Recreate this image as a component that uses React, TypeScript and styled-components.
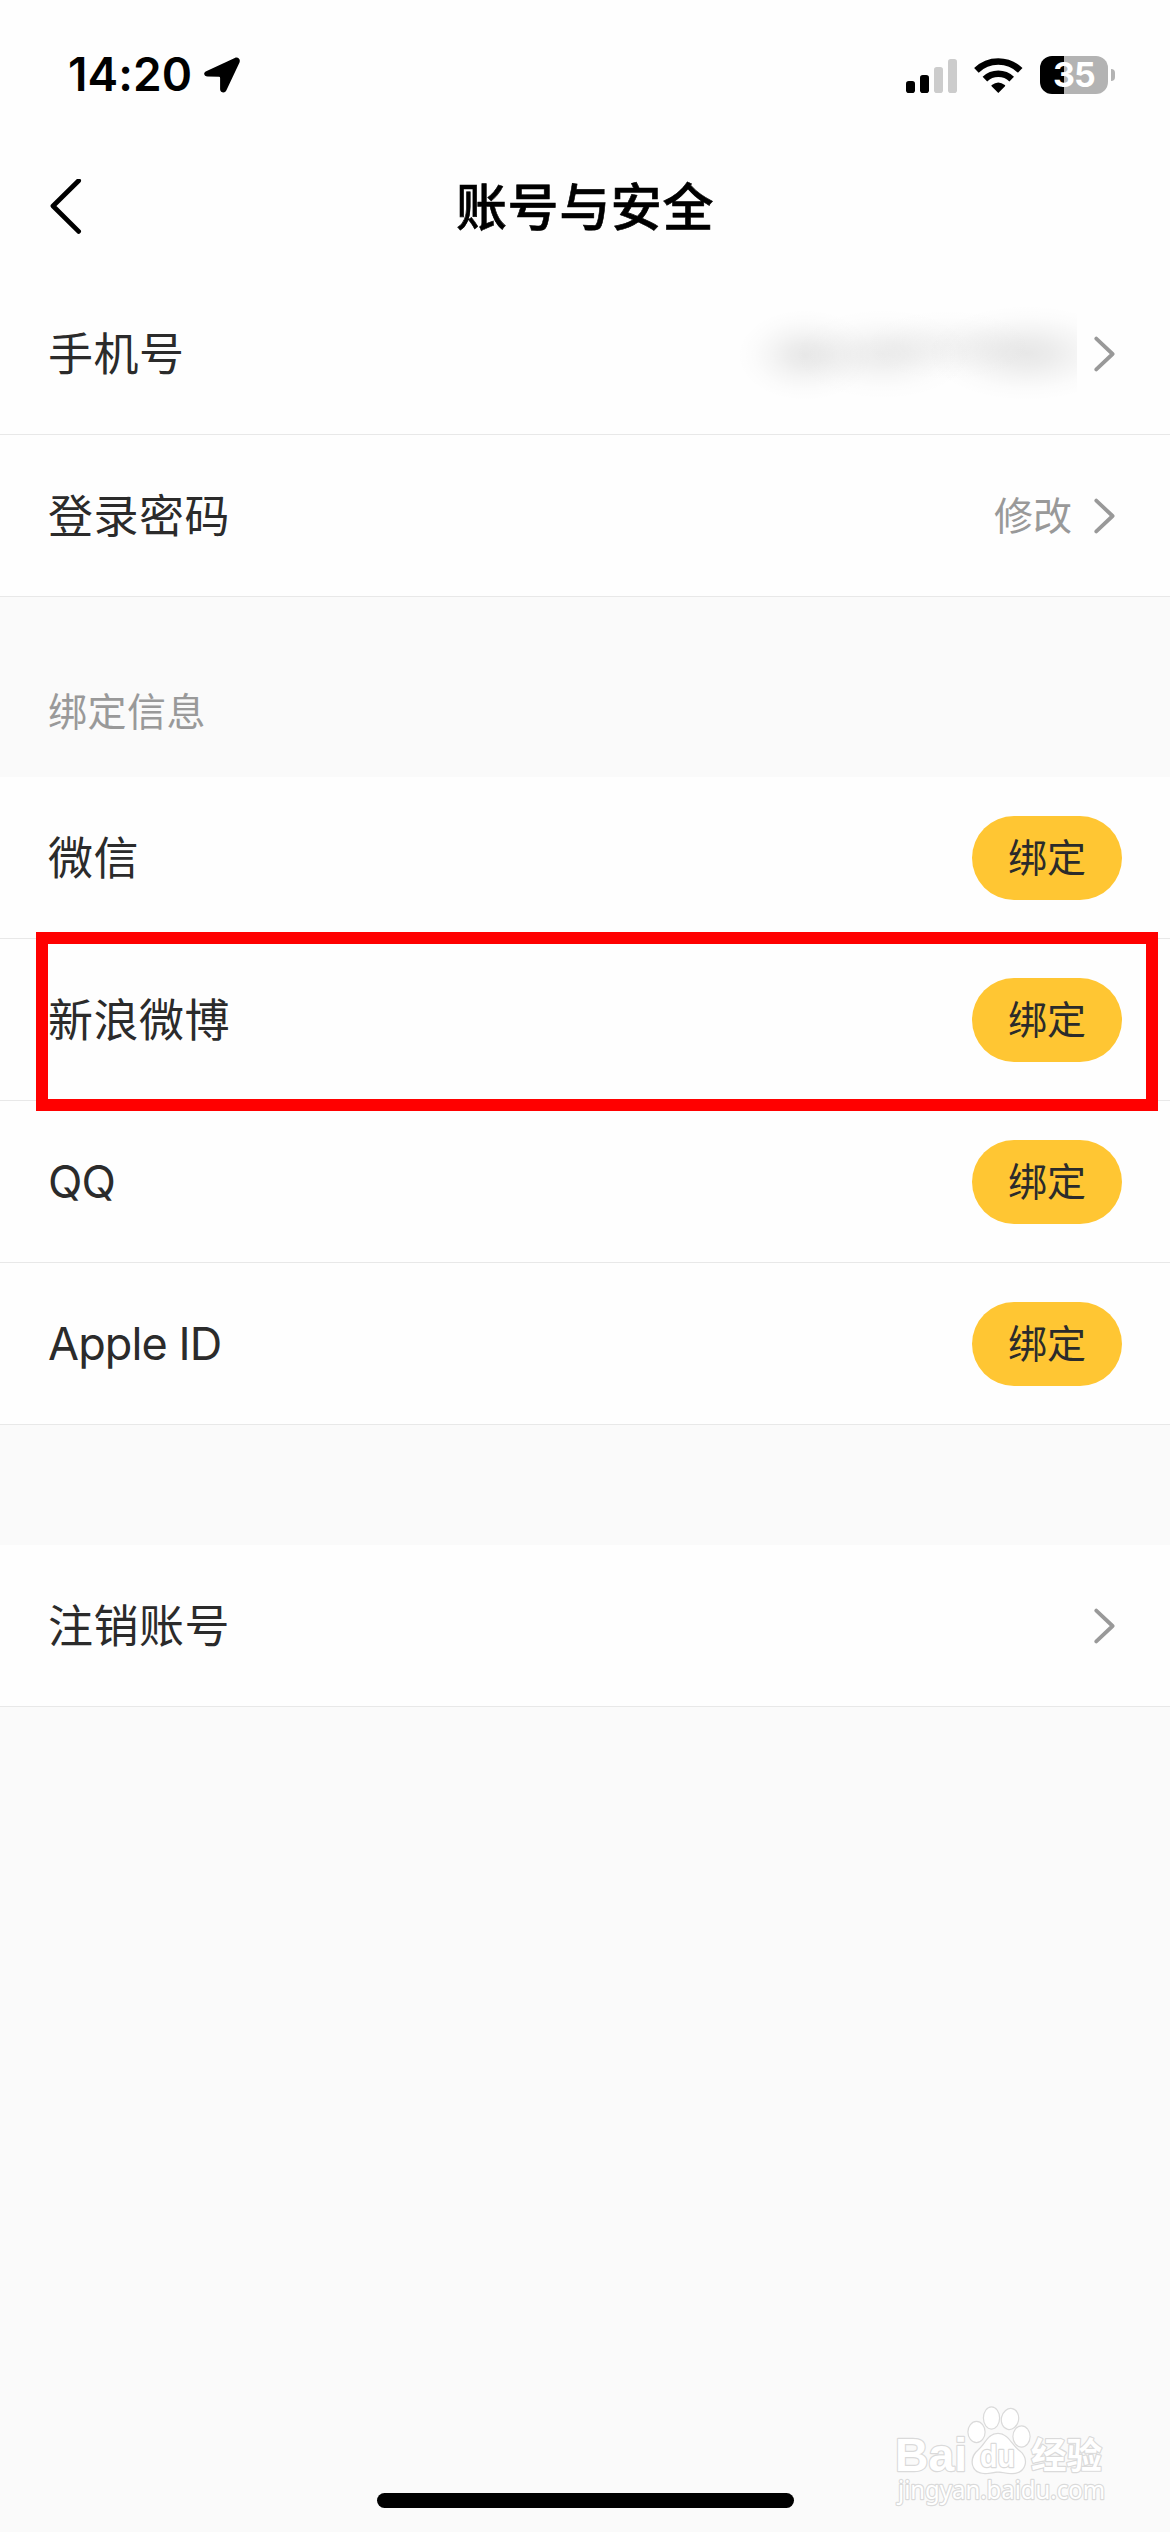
import React from "react";
import styled, { createGlobalStyle, css } from "styled-components";

const GlobalStyle = createGlobalStyle`
  * { box-sizing: border-box; }
  html, body { margin: 0; padding: 0; background: #fafafa; }
  body {
    font-family: Inter, "Noto Sans CJK SC", "Liberation Sans", sans-serif;
    color: #2b2b2b;
  }
`;

const Screen = styled.div`
  position: relative;
  display: flex;
  flex-direction: column;
  width: 1170px;
  height: 2532px;
  overflow: hidden;
  background: #fafafa;
`;

const StatusBar = styled.header`
  display: flex;
  align-items: center;
  justify-content: space-between;
  height: 141px;
  padding: 8px 55px 0 68px;
  background: #fefefe;
`;

const StatusGroup = styled.div<{ $gap: number }>`
  display: flex;
  align-items: center;
  gap: ${(p) => p.$gap}px;
`;

const Clock = styled.span`
  width: 124px;
  font-size: 46px;
  font-weight: 600;
  line-height: 54px;
  padding-bottom: 2px;
  letter-spacing: 0.1px;
  color: #000;
  white-space: nowrap;
`;

const Battery = styled.div`
  display: flex;
  align-items: center;
  gap: 3px;
`;

const BatteryBody = styled.div<{ $level: number }>`
  display: flex;
  align-items: center;
  justify-content: center;
  width: 68px;
  height: 38px;
  border-radius: 12px;
  background: linear-gradient(to right, #000 ${(p) => p.$level}%, #b3b3b3 ${(p) => p.$level}%);
  color: #fff;
  font-size: 34px;
  font-weight: 700;
  line-height: 38px;
  letter-spacing: -0.8px;
`;

const BatteryCap = styled.div`
  width: 4px;
  height: 12px;
  border-radius: 0 4px 4px 0;
  background: #b3b3b3;
`;

const TitleBar = styled.nav`
  display: grid;
  grid-template-columns: 1fr auto 1fr;
  align-items: center;
  height: 132px;
  padding: 0 48px;
  background: #fefefe;
`;

const BackButton = styled.button`
  display: flex;
  justify-self: start;
  padding: 0;
  border: 0;
  background: none;
`;

const Title = styled.h1`
  margin: 0;
  padding-top: 1px;
  font-size: 51px;
  font-weight: 500;
  line-height: 72px;
  letter-spacing: 0.6px;
  color: #000;
  -webkit-text-stroke: 0.6px #000;
`;

const Group = styled.section`
  display: flex;
  flex-direction: column;
`;

const Row = styled.div`
  position: relative;
  display: flex;
  align-items: center;
  justify-content: space-between;
  height: 162px;
  padding: 1px 48px 0;
  border-bottom: 1px solid #e8e8e8;
  background: #fefefe;
`;

const Label = styled.span<{ $latin?: boolean }>`
  padding-top: ${(p) => (p.$latin ? 0 : 2)}px;
  font-size: 45px;
  line-height: 64px;
  letter-spacing: ${(p) => (p.$latin ? -0.9 : 0.5)}px;
  white-space: nowrap;
`;

const Trailing = styled.div`
  display: flex;
  align-items: center;
  gap: 21px;
  padding-right: 7px;
`;

const Value = styled.span`
  font-size: 39px;
  line-height: 56px;
  color: #999;
`;

const blob = (size: string, at: string, a: number) =>
  `radial-gradient(ellipse ${size} at ${at}, rgba(0,0,0,${a}), rgba(0,0,0,${a * 0.8}) 25%, rgba(0,0,0,${a * 0.42}) 50%, rgba(0,0,0,${a * 0.12}) 75%, transparent)`;

const MaskedNumber = styled.div`
  width: 344px;
  height: 110px;
  margin-right: -5px;
  background:
    ${blob("68px 46px", "72px 56px", 0.085)},
    ${blob("90px 46px", "150px 55px", 0.07)},
    ${blob("90px 38px", "215px 46px", 0.035)},
    ${blob("100px 48px", "294px 54px", 0.09)};
`;

const BindButton = styled.button`
  width: 150px;
  height: 84px;
  padding: 0;
  border: 0;
  border-radius: 42px;
  background: #ffc633;
  color: #2b2b2b;
  font-family: inherit;
  font-size: 39px;
  line-height: 84px;
  text-align: center;
`;

const SectionTitle = styled.h2`
  display: flex;
  align-items: center;
  height: 180px;
  margin: 0;
  padding: 49px 48px 0;
  color: #999;
  font-size: 39px;
  font-weight: 400;
  line-height: 56px;
  letter-spacing: 0.5px;
`;

const Spacer = styled.div`
  height: 120px;
`;

const Highlight = styled.div`
  position: absolute;
  z-index: 2;
  top: -7px;
  left: 36px;
  width: 1122px;
  height: 179px;
  border: 12px solid #f00;
  pointer-events: none;
`;

const Footer = styled.footer`
  display: flex;
  justify-content: center;
  margin-top: auto;
  padding-bottom: 24px;
`;

const HomeIndicator = styled.div`
  width: 417px;
  height: 15px;
  border-radius: 8px;
  background: #000;
`;

const watermarkInk = css`
  fill: #fff;
  stroke: #dadada;
  stroke-width: 2.4px;
  stroke-linejoin: round;
  paint-order: stroke;
`;

const WatermarkArt = styled.svg`
  position: absolute;
  left: 890px;
  top: 2400px;
  ellipse, path, text { ${watermarkInk} }
`;

const BrandText = styled.text`
  font-family: "Liberation Sans", sans-serif;
  font-weight: 700;
`;

const BrandCjk = styled.text`
  font-family: "Noto Sans CJK SC", sans-serif;
  font-weight: 700;
`;

const SiteText = styled.text`
  font-family: "Noto Sans", sans-serif;
`;

const LocationArrow = () => (
  <svg width="36" height="36" viewBox="0 0 36 36">
    <path
      d="M2.2 14.2 L30.8 0.9 C34 -0.4 36.8 2.2 35.5 5.4 L22.3 33.6 C20.9 36.8 16.2 35.8 16.1 32.2 V20.8 Q16.1 19.7 15 19.7 L3.6 19.6 C0.1 19.5 -1.3 15.8 2.2 14.2 Z"
      fill="#000"
    />
  </svg>
);

const SignalBars = () => (
  <svg width="51" height="36" viewBox="0 0 51 36">
    <rect x="0" y="24" width="9" height="12" rx="2.8" fill="#000" />
    <rect x="14" y="18" width="9" height="18" rx="2.8" fill="#000" />
    <rect x="28" y="10" width="9" height="26" rx="2.8" fill="#ccc" />
    <rect x="42" y="2" width="9" height="34" rx="2.8" fill="#ccc" />
  </svg>
);

const WifiIcon = () => (
  <svg width="49" height="36" viewBox="0 0 49 36">
    <g fill="none" stroke="#000" strokeWidth="6.6">
      <path d="M2.4 13.4 A31.4 31.4 0 0 1 46.2 13.4" />
      <path d="M10.9 22.1 A19.3 19.3 0 0 1 37.7 22.1" />
    </g>
    <path d="M24.3 36 L17.6 29.3 Q17 28.6 17.8 28 Q24.3 23 30.8 28 Q31.6 28.6 31 29.3 Z" fill="#000" />
  </svg>
);

const BackIcon = () => (
  <svg width="34" height="56" viewBox="0 0 34 56">
    <path d="M30.6 1.8 L5 27 L30.6 52.4" fill="none" stroke="#000" strokeWidth="4.8" strokeLinecap="round" strokeLinejoin="round" />
  </svg>
);

const ChevronIcon = () => (
  <svg width="22" height="36" viewBox="0 0 22 36">
    <path d="M3.3 2.6 L19.6 18 L3.3 33.4" fill="none" stroke="#999" strokeWidth="3.8" strokeLinecap="round" strokeLinejoin="round" />
  </svg>
);

const Watermark = () => (
  <WatermarkArt width="230" height="120" viewBox="0 0 230 120">
    <BrandText x="5" y="71" fontSize="47" textLength="72" lengthAdjust="spacingAndGlyphs">Bai</BrandText>
    <ellipse cx="86.5" cy="32" rx="8" ry="10" />
    <ellipse cx="101.5" cy="18" rx="7.500" ry="10.500" />
    <ellipse cx="120" cy="19" rx="8" ry="10" transform="rotate(12 120 19)" />
    <ellipse cx="131.5" cy="36.5" rx="8" ry="10" />
    <path d="M108 34 C98 34 96 44 89 50 C79 58 81 73 95 73 C101 73 103 71.500 108 71.500 C113 71.500 115 73 122 73 C136 73 139 58 129 51 C121 45 118 34 108 34 Z" />
    <BrandText x="90" y="66.500" fontSize="31" textLength="35" lengthAdjust="spacingAndGlyphs">du</BrandText>
    <BrandCjk x="141" y="68.500" fontSize="36" textLength="71" lengthAdjust="spacingAndGlyphs">经验</BrandCjk>
    <SiteText x="8" y="99" fontSize="25" textLength="207" lengthAdjust="spacingAndGlyphs">jingyan.baidu.com</SiteText>
  </WatermarkArt>
);

const accounts = [
  { name: "微信", latin: false, marked: false },
  { name: "新浪微博", latin: false, marked: true },
  { name: "QQ", latin: true, marked: false },
  { name: "Apple ID", latin: true, marked: false },
];

export default function App() {
  return (
    <>
      <GlobalStyle />
      <Screen>
        <StatusBar>
          <StatusGroup $gap={12}>
            <Clock>14:20</Clock>
            <LocationArrow />
          </StatusGroup>
          <StatusGroup $gap={17}>
            <SignalBars />
            <WifiIcon />
            <Battery>
              <BatteryBody $level={35.3}>35</BatteryBody>
              <BatteryCap />
            </Battery>
          </StatusGroup>
        </StatusBar>
        <TitleBar>
          <BackButton aria-label="返回"><BackIcon /></BackButton>
          <Title>账号与安全</Title>
        </TitleBar>
        <Group>
          <Row>
            <Label>手机号</Label>
            <Trailing>
              <MaskedNumber />
              <ChevronIcon />
            </Trailing>
          </Row>
          <Row>
            <Label>登录密码</Label>
            <Trailing>
              <Value>修改</Value>
              <ChevronIcon />
            </Trailing>
          </Row>
        </Group>
        <SectionTitle>绑定信息</SectionTitle>
        <Group>
          {accounts.map((account) => (
            <Row key={account.name}>
              <Label $latin={account.latin}>{account.name}</Label>
              <BindButton>绑定</BindButton>
              {account.marked && <Highlight />}
            </Row>
          ))}
        </Group>
        <Spacer />
        <Group>
          <Row>
            <Label>注销账号</Label>
            <Trailing>
              <ChevronIcon />
            </Trailing>
          </Row>
        </Group>
        <Footer>
          <HomeIndicator />
        </Footer>
        <Watermark />
      </Screen>
    </>
  );
}
